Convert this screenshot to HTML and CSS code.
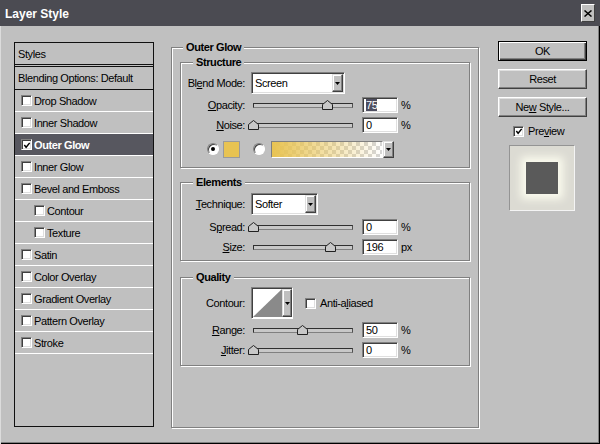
FILE: index.html
```html
<!DOCTYPE html>
<html>
<head>
<meta charset="utf-8">
<title>Layer Style</title>
<link rel="stylesheet" href="styles.css">
</head>
<body>
<div class="dialog">
  <div class="titlebar">
    <span class="title">Layer Style</span>
    <span class="close"><svg width="8" height="7" viewBox="0 0 8 7"><path d="M0.5 0.5 L7.5 6.5 M7.5 0.5 L0.5 6.5" stroke="#000" stroke-width="1.5" fill="none"/></svg></span>
  </div>
  <div class="content">
    <div class="styles-list">
      <div class="row head">Styles</div>
      <div class="row blend">Blending Options: Default</div>
      <div class="row item"><span class="cb"></span>Drop Shadow</div>
      <div class="row item"><span class="cb"></span>Inner Shadow</div>
      <div class="row item sel"><span class="cb"><svg width="9" height="9" viewBox="0 0 9 9"><path d="M1.5 4 L3.5 6.5 L7.5 1.5" stroke="#000" stroke-width="1.6" fill="none"/></svg></span>Outer Glow</div>
      <div class="row item"><span class="cb"></span>Inner Glow</div>
      <div class="row item"><span class="cb"></span>Bevel and Emboss</div>
      <div class="row item sub-item"><span class="cb"></span>Contour</div>
      <div class="row item sub-item"><span class="cb"></span>Texture</div>
      <div class="row item"><span class="cb"></span>Satin</div>
      <div class="row item"><span class="cb"></span>Color Overlay</div>
      <div class="row item"><span class="cb"></span>Gradient Overlay</div>
      <div class="row item"><span class="cb"></span>Pattern Overlay</div>
      <div class="row item"><span class="cb"></span>Stroke</div>
    </div>

    <div class="group main">
      <div class="legend">Outer Glow</div>

      <div class="group sub structure">
        <div class="legend">Structure</div>
        <div class="frow drop-row">
          <span class="lbl">Bl<u>e</u>nd Mode:</span>
          <div class="select screen"><span class="val">Screen</span><span class="arrow"><svg width="5" height="3" viewBox="0 0 5 3"><path d="M0 0 H5 L2.5 3 Z" fill="#000"/></svg></span></div>
        </div>
        <div class="frow slider-row first">
          <span class="lbl"><u>O</u>pacity:</span>
          <div class="track"><span class="thumb" style="left:75%"><svg width="11" height="10" viewBox="0 0 11 10"><path d="M0.5 4.5 L5.5 0.5 L10.5 4.5 V9.5 H0.5 Z" fill="#c8c8c8" stroke="#202020"/></svg></span></div>
          <div class="field"><span class="hl">75</span></div>
          <span class="unit">%</span>
        </div>
        <div class="frow slider-row">
          <span class="lbl"><u>N</u>oise:</span>
          <div class="track"><span class="thumb" style="left:0%"><svg width="11" height="10" viewBox="0 0 11 10"><path d="M0.5 4.5 L5.5 0.5 L10.5 4.5 V9.5 H0.5 Z" fill="#c8c8c8" stroke="#202020"/></svg></span></div>
          <div class="field">0</div>
          <span class="unit">%</span>
        </div>
        <div class="frow color-row">
          <span class="radio on"></span>
          <span class="swatch"></span>
          <span class="radio"></span>
          <div class="gradpick"><span class="grad"></span><span class="arrow"><svg width="5" height="3" viewBox="0 0 5 3"><path d="M0 0 H5 L2.5 3 Z" fill="#000"/></svg></span></div>
        </div>
      </div>

      <div class="group sub elements">
        <div class="legend">Elements</div>
        <div class="frow drop-row">
          <span class="lbl"><u>T</u>echnique:</span>
          <div class="select softer"><span class="val">Softer</span><span class="arrow"><svg width="5" height="3" viewBox="0 0 5 3"><path d="M0 0 H5 L2.5 3 Z" fill="#000"/></svg></span></div>
        </div>
        <div class="frow slider-row first">
          <span class="lbl">S<u>p</u>read:</span>
          <div class="track"><span class="thumb" style="left:0%"><svg width="11" height="10" viewBox="0 0 11 10"><path d="M0.5 4.5 L5.5 0.5 L10.5 4.5 V9.5 H0.5 Z" fill="#c8c8c8" stroke="#202020"/></svg></span></div>
          <div class="field">0</div>
          <span class="unit">%</span>
        </div>
        <div class="frow slider-row">
          <span class="lbl"><u>S</u>ize:</span>
          <div class="track"><span class="thumb" style="left:78.4%"><svg width="11" height="10" viewBox="0 0 11 10"><path d="M0.5 4.5 L5.5 0.5 L10.5 4.5 V9.5 H0.5 Z" fill="#c8c8c8" stroke="#202020"/></svg></span></div>
          <div class="field">196</div>
          <span class="unit">px</span>
        </div>
      </div>

      <div class="group sub quality">
        <div class="legend">Quality</div>
        <div class="frow contour-row">
          <span class="lbl">Contour:</span>
          <div class="contour"><svg class="curve" width="29" height="28" viewBox="0 0 29 28"><rect width="29" height="28" fill="#fff"/><path d="M0 28 L29 0 V28 Z" fill="#8a8a8a"/></svg><span class="arrow"><svg width="5" height="3" viewBox="0 0 5 3"><path d="M0 0 H5 L2.5 3 Z" fill="#000"/></svg></span></div>
          <span class="cb aa"></span>
          <span class="aa-text">Anti-a<u>l</u>iased</span>
        </div>
        <div class="frow slider-row first">
          <span class="lbl"><u>R</u>ange:</span>
          <div class="track"><span class="thumb" style="left:50%"><svg width="11" height="10" viewBox="0 0 11 10"><path d="M0.5 4.5 L5.5 0.5 L10.5 4.5 V9.5 H0.5 Z" fill="#c8c8c8" stroke="#202020"/></svg></span></div>
          <div class="field">50</div>
          <span class="unit">%</span>
        </div>
        <div class="frow slider-row">
          <span class="lbl"><u>J</u>itter:</span>
          <div class="track"><span class="thumb" style="left:0%"><svg width="11" height="10" viewBox="0 0 11 10"><path d="M0.5 4.5 L5.5 0.5 L10.5 4.5 V9.5 H0.5 Z" fill="#c8c8c8" stroke="#202020"/></svg></span></div>
          <div class="field">0</div>
          <span class="unit">%</span>
        </div>
      </div>
    </div>

    <div class="side">
      <div class="btn default"><span>OK</span></div>
      <div class="btn"><span>Reset</span></div>
      <div class="btn"><span>Ne<u>w</u> Style...</span></div>
      <div class="preview-row"><span class="cb"><svg width="9" height="9" viewBox="0 0 9 9"><path d="M1.5 4 L3.5 6.5 L7.5 1.5" stroke="#000" stroke-width="1.6" fill="none"/></svg></span><span class="pv-text">Pre<u>v</u>iew</span></div>
      <div class="preview-box"><span class="square"></span></div>
    </div>
  </div>
</div>
</body>
</html>
```

FILE: styles.css
```css
* { box-sizing: border-box; }
html, body { margin: 0; padding: 0; }
body {
  width: 600px; height: 444px; overflow: hidden;
  background: #c0c0c0;
  font-family: "Liberation Sans", Arial, sans-serif;
  font-size: 11px; letter-spacing: -0.4px; color: #000;
}
u { text-decoration: underline; text-underline-offset: 1px; }

.dialog { width: 600px; height: 444px; display: flex; flex-direction: column; background: #c0c0c0; }

.titlebar {
  height: 26px; flex: none; background: #4b4b52;
  display: flex; align-items: center; justify-content: space-between;
  padding: 0 5px 0 5px;
}
.title { color: #fff; font-weight: bold; font-size: 12px; letter-spacing: 0; padding-top: 2px; }
.close {
  width: 14px; height: 18px; background: #c0c0c0;
  border: 1px solid; border-color: #fff #404040 #404040 #fff;
  display: flex; align-items: center; justify-content: center;
}

.content {
  flex: 1; display: flex; align-items: flex-start;
  padding: 16px 0 0 14px;
  box-shadow: inset 1px 0 #dcdcdc, inset -1px -1px #000, inset -2px -2px #808080;
}

/* styles list */
.styles-list { width: 140px; height: 385px; flex: none; border: 1px solid #101010; }
.row { display: flex; align-items: center; white-space: nowrap; }
.row.head { height: 24px; padding-left: 3px; border-bottom: 3px double #101010; }
.row.blend { height: 23px; padding-left: 3px; border-bottom: 1px solid #101010; }
.row.item { height: 22px; padding-left: 6px; border-bottom: 1px solid #fff; }
.row.sub-item { padding-left: 19px; }
.row.sel { background: #57575f; color: #fff; font-weight: bold; }
.cb {
  width: 11px; height: 11px; flex: none; margin-right: 2px;
  background: #fff; border: 1px solid; border-color: #808080 #fff #fff #808080;
  box-shadow: inset 1px 1px #404040, inset -1px -1px #dfdfdf;
  display: flex; align-items: center; justify-content: center;
}
.cb svg { display: block; margin: 1px 0 0 1px; }

/* group boxes */
.group { border: 1px solid #808080; box-shadow: inset 1px 1px #fff, 1px 1px #fff; }
.main { width: 308px; height: 381px; flex: none; margin: 5px 0 0 17px; }
.legend {
  width: max-content; height: 13px; line-height: 13px; margin-top: -7px;
  padding: 0 3px; background: #c0c0c0; font-weight: bold; white-space: nowrap;
}
.main > .legend { margin-left: 11px; }
.sub { width: 290px; margin-left: 8px; }
.sub > .legend { margin-left: 12px; }
.structure { margin-top: 8px; padding-bottom: 8px; }
.elements { margin-top: 14px; padding-bottom: 3px; }
.quality { margin-top: 16px; padding-bottom: 5px; }

.frow { display: flex; align-items: center; white-space: nowrap; }
.lbl { width: 64px; flex: none; text-align: right; }
.drop-row { height: 22px; margin-top: 3px; }
.elements .drop-row { margin-top: 4px; }
.slider-row { height: 20px; }
.structure .slider-row.first { margin-top: 1px; }
.elements .slider-row.first { margin-top: 2px; }
.quality .slider-row.first { margin-top: 1px; }

.select {
  height: 22px; margin-left: 6px; display: flex; background: #fff;
  border: 1px solid; border-color: #808080 #fff #fff #808080;
  box-shadow: inset 1px 1px #404040, inset -1px -1px #dfdfdf;
  padding: 1px;
}
.select.screen { width: 94px; }
.select.softer { width: 67px; }
.select .val { flex: 1; display: flex; align-items: center; padding-left: 2px; }
.arrow {
  width: 11px; flex: none; background: #c0c0c0;
  border: 1px solid; border-color: #dfdfdf #404040 #404040 #dfdfdf;
  box-shadow: inset -1px -1px #808080, inset 1px 1px #fff;
  display: flex; align-items: center; justify-content: center;
}
.arrow svg { display: block; }

.track {
  position: relative; width: 100px; height: 5px; flex: none; margin-left: 8px;
  background: #c8c8c8; border: 1px solid; border-color: #303030 #505050 #808080 #303030;
}
.thumb { position: absolute; top: -4px; width: 11px; height: 10px; margin-left: -6px; }
.thumb svg { display: block; }

.field {
  width: 36px; height: 16px; flex: none; margin-left: 9px;
  background: #fff; padding-left: 3px; display: flex; align-items: center;
  border: 1px solid; border-color: #808080 #fff #fff #808080;
  box-shadow: inset 1px 1px #404040, inset -1px -1px #dfdfdf;
}
.hl { background: #4e4e60; color: #fff; }
.unit { margin-left: 3px; }

.color-row { height: 20px; margin-top: 4px; padding-left: 26px; }
.radio {
  width: 12px; height: 12px; flex: none; border-radius: 50%; background: #fff;
  border: 1px solid; border-color: #808080 #fff #fff #808080;
  box-shadow: inset 1px 1px #404040;
  display: flex; align-items: center; justify-content: center;
}
.radio.on::after { content: ""; width: 4px; height: 4px; border-radius: 50%; background: #000; }
.swatch {
  width: 17px; height: 17px; flex: none; margin-left: 4px;
  background: #e8c352; border: 1px solid #9a9a9a;
}
.color-row .radio + .swatch + .radio { margin-left: 13px; }
.gradpick { width: 123px; height: 17px; margin-left: 6px; display: flex; }
.grad {
  flex: 1;
  border: 1px solid; border-color: #808080 #fff #fff #808080;
  background:
    linear-gradient(to right, rgba(232,195,82,1) 0%, rgba(232,195,82,0.55) 45%, rgba(232,195,82,0) 100%),
    repeating-conic-gradient(#d6d6d6 0 25%, #ffffff 0 50%) 0 0 / 8px 8px;
}

.contour-row { height: 32px; margin-top: 3px; }
.contour {
  width: 42px; height: 32px; margin-left: 6px; display: flex; background: #fff;
  border: 1px solid; border-color: #808080 #fff #fff #808080;
  box-shadow: inset 1px 1px #404040;
  padding: 1px 0 1px 1px;
}
.contour .curve { display: block; flex: none; }
.contour .arrow { flex: 1; }
.cb.aa { margin-left: 12px; margin-right: 0; }
.aa-text { margin-left: 4px; }

/* side */
.side { width: 89px; flex: none; margin: -1px 0 0 19px; display: flex; flex-direction: column; }
.btn {
  height: 20px; display: flex; align-items: center; justify-content: center;
  background: #c0c0c0; border: 1px solid; border-color: #fff #404040 #404040 #fff;
  box-shadow: inset -1px -1px #808080, inset 1px 1px #dfdfdf;
}
.btn + .btn { margin-top: 8px; }
.btn.default {
  border: 1px solid #000;
  box-shadow: inset 1px 1px #fff, inset -1px -1px #404040, inset -2px -2px #808080;
}
.preview-row { height: 14px; margin-top: 7px; padding-left: 15px; display: flex; align-items: center; }
.pv-text { margin-left: 2px; }
.preview-box {
  width: 66px; height: 66px; margin: 7px 0 0 11px;
  background: #dcdbd3; border: 1px solid; border-color: #949494 #f4f4f4 #f4f4f4 #949494;
  display: flex; align-items: center; justify-content: center;
}
.square { width: 32px; height: 32px; background: #5a5a5a; box-shadow: 0 0 8px 5px #fbfbee; }
```
